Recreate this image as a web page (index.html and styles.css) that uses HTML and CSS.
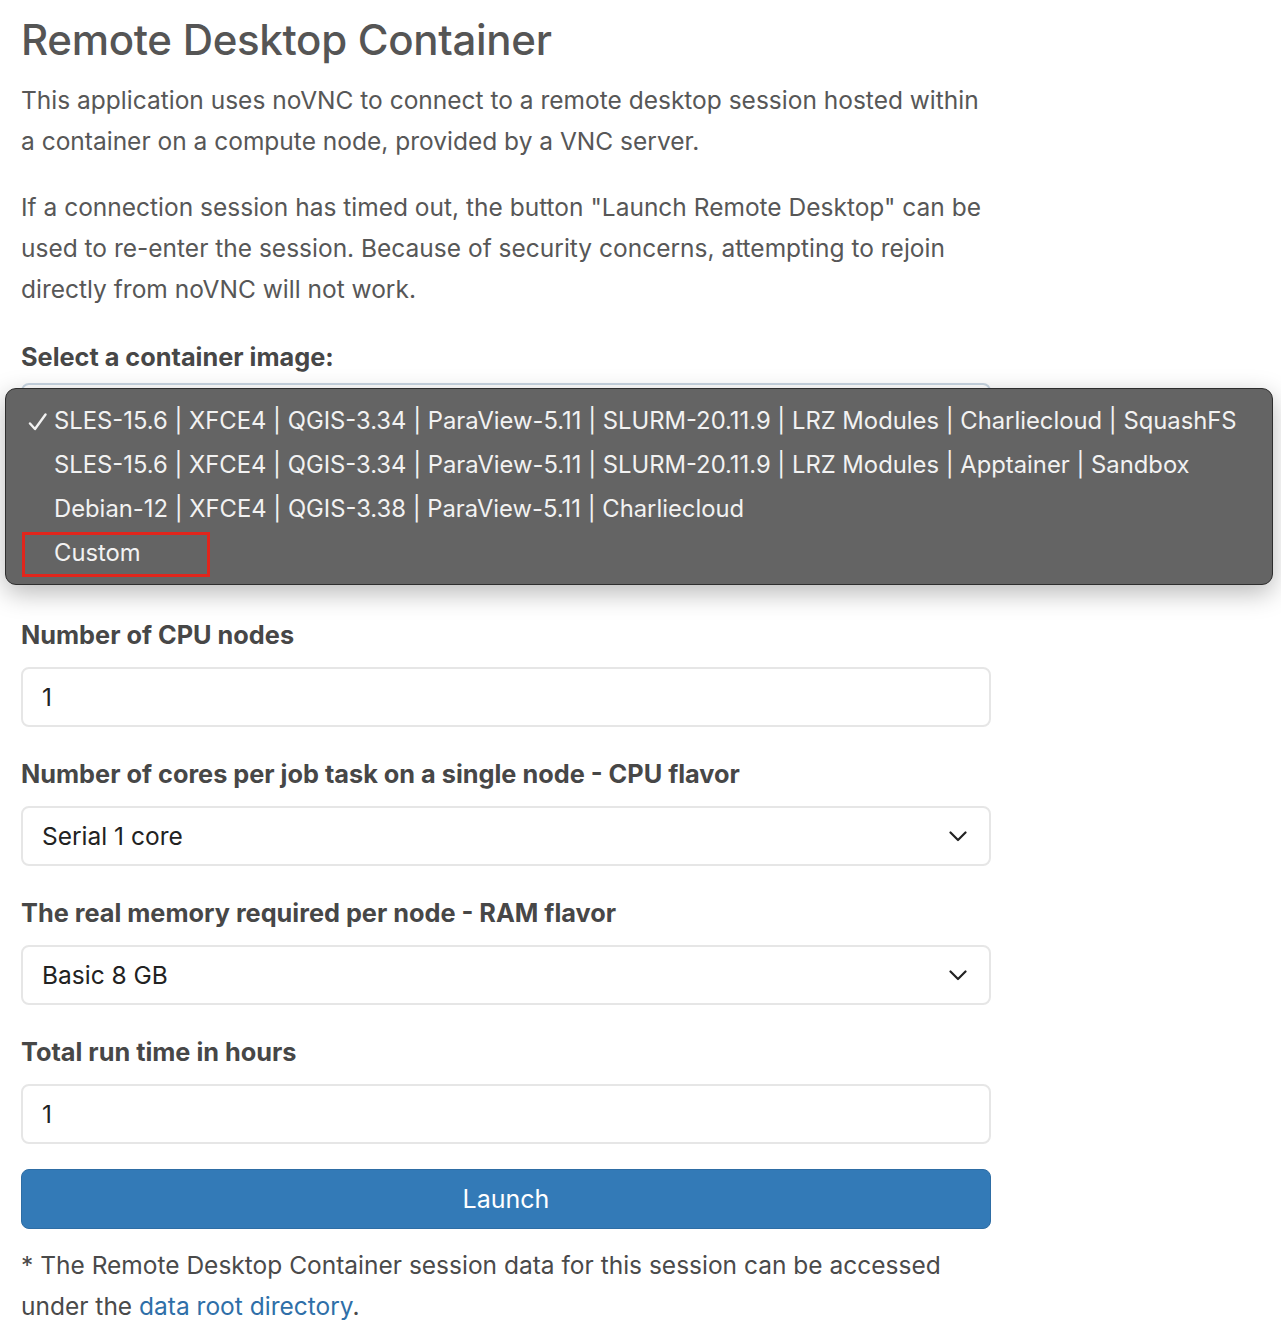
FILE: index.html
```html
<!DOCTYPE html>
<html>
<head>
<meta charset="utf-8">
<link rel="stylesheet" href="styles.css">
</head>
<body>
<div class="page">
  <h1 class="title">Remote Desktop Container</h1>
  <p class="text">This application uses noVNC to connect to a remote desktop session hosted within a container on a compute node, provided by a VNC server.</p>
  <p class="text text-last">If a connection session has timed out, the button "Launch Remote Desktop" can be used to re-enter the session. Because of security concerns, attempting to rejoin directly from noVNC will not work.</p>

  <div class="field field-image">
    <label class="label label-image">Select a container image:</label>
    <div class="control select-focus"></div>
    <div class="dropdown">
      <div class="option"><span class="check"><svg width="19" height="18" viewBox="0 0 19 18"><path d="M2 10.5 L7 16 L17.5 1.5" fill="none" stroke="#f2f2f2" stroke-width="2.4" stroke-linecap="round" stroke-linejoin="round"/></svg></span>SLES-15.6 | XFCE4 | QGIS-3.34 | ParaView-5.11 | SLURM-20.11.9 | LRZ Modules | Charliecloud | SquashFS</div>
      <div class="option"><span class="check"></span>SLES-15.6 | XFCE4 | QGIS-3.34 | ParaView-5.11 | SLURM-20.11.9 | LRZ Modules | Apptainer | Sandbox</div>
      <div class="option"><span class="check"></span>Debian-12 | XFCE4 | QGIS-3.38 | ParaView-5.11 | Charliecloud</div>
      <div class="option"><span class="check"></span>Custom</div>
      <div class="highlight"></div>
    </div>
  </div>

  <div class="field">
    <label class="label">Number of CPU nodes</label>
    <div class="control">1</div>
  </div>

  <div class="field">
    <label class="label">Number of cores per job task on a single node - CPU flavor</label>
    <div class="control select">Serial 1 core
      <svg class="chev" width="18" height="11" viewBox="0 0 18 11"><path d="M1.5 1.5 L9 9 L16.5 1.5" fill="none" stroke="#222" stroke-width="2.2" stroke-linecap="round" stroke-linejoin="round"/></svg>
    </div>
  </div>

  <div class="field">
    <label class="label">The real memory required per node - RAM flavor</label>
    <div class="control select">Basic 8 GB
      <svg class="chev" width="18" height="11" viewBox="0 0 18 11"><path d="M1.5 1.5 L9 9 L16.5 1.5" fill="none" stroke="#222" stroke-width="2.2" stroke-linecap="round" stroke-linejoin="round"/></svg>
    </div>
  </div>

  <div class="field field-last">
    <label class="label">Total run time in hours</label>
    <div class="control">1</div>
  </div>

  <button class="launch">Launch</button>

  <p class="text note">* The Remote Desktop Container session data for this session can be accessed under the <a class="link" href="#">data root directory</a>.</p>
</div>
</body>
</html>
```

FILE: styles.css
```css
html, body {
  margin: 0;
  padding: 0;
  background: #ffffff;
}
body {
  font-family: Inter, "Liberation Sans", Arial, sans-serif;
  color: #555555;
}
.page {
  width: 970px;
  padding: 14px 0 0 21px;
}
.title {
  font-size: 42px;
  font-weight: 500;
  line-height: 52px;
  margin: 0 0 14px 0;
  color: #555555;
  letter-spacing: -0.3px;
}
.text {
  font-size: 24.5px;
  line-height: 41px;
  margin: 0 0 25px 0;
  width: 970px;
  color: #575757;
}
.text-last {
  margin-bottom: 30px;
}
.field {
  display: flex;
  flex-direction: column;
  margin-bottom: 30px;
}
.field-last {
  margin-bottom: 25px;
}
.field-image {
  position: relative;
  height: 278px;
  margin-bottom: 0;
}
.label {
  font-size: 25.3px;
  font-weight: 700;
  color: #474747;
  line-height: 34px;
  margin-bottom: 15px;
}
.label-image {
  margin-bottom: 9px;
}
.control {
  box-sizing: border-box;
  height: 60px;
  border: 2px solid #e6e6e6;
  border-radius: 8px;
  padding: 0 22px 0 19px;
  font-size: 24.5px;
  color: #222;
  display: flex;
  align-items: center;
  justify-content: space-between;
}
.select-focus {
  border-color: #c9d6e2;
  background: #fff;
}
.dropdown {
  position: absolute;
  left: -16px;
  top: 48px;
  width: 1268px;
  box-sizing: border-box;
  height: 197px;
  background: #646464;
  border: 1px solid #2e2e2e;
  border-radius: 11px;
  box-shadow: 0 8px 26px rgba(0,0,0,0.28);
  padding: 9px 0 0 0;
  font-size: 23.8px;
  color: #f2f2f2;
}
.option {
  height: 44px;
  display: flex;
  align-items: center;
  white-space: nowrap;
}
.check {
  flex: none;
  width: 48px;
  display: flex;
  justify-content: flex-end;
  align-items: center;
  padding-right: 7px;
  padding-top: 3px;
  box-sizing: border-box;
}
.highlight {
  position: absolute;
  left: 16px;
  top: 143px;
  width: 188px;
  height: 45px;
  box-sizing: border-box;
  border: 3px solid #e0261c;
}
.chev {
  flex: none;
}
.launch {
  display: block;
  width: 970px;
  height: 60px;
  background: #337ab7;
  border: 1px solid #2e6da4;
  border-radius: 8px;
  color: #ffffff;
  font-family: Inter, "Liberation Sans", Arial, sans-serif;
  font-size: 25px;
  margin: 0 0 16px 0;
  padding: 0;
}
.note {
  margin: 0;
  color: #4a4a4a;
}
.link {
  color: #2f6fa8;
  text-decoration: none;
}
```
